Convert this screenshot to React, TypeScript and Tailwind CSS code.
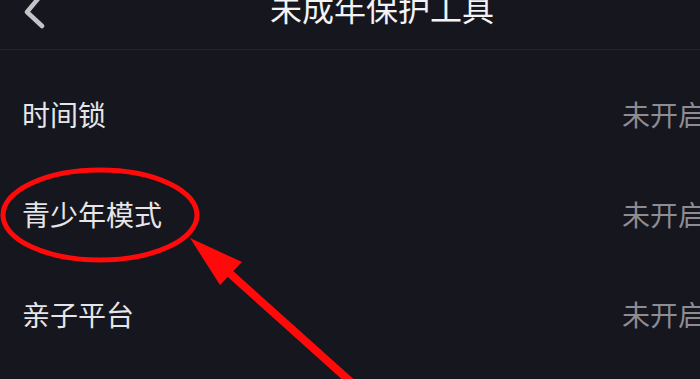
const rows = [
  { label: '时间锁', status: '未开启' },
  { label: '青少年模式', status: '未开启' },
  { label: '亲子平台', status: '未开启' },
];

function BackChevron() {
  return (
    <svg className="w-[26px] h-[40px] -mt-[10px] shrink-0" viewBox="0 0 26 40" fill="none">
      <path
        d="M20 4 L5 22 L20 36"
        stroke="#c4c4c8"
        strokeWidth="4.5"
        strokeLinecap="round"
        strokeLinejoin="round"
      />
    </svg>
  );
}

function Annotation() {
  return (
    <svg
      className="absolute inset-0 w-[700px] h-[379px] pointer-events-none"
      viewBox="0 0 700 379"
      fill="none"
    >
      <ellipse cx="100" cy="215" rx="97" ry="45" stroke="#ff0a0a" strokeWidth="5" />
      <line x1="226" y1="270" x2="362" y2="392" stroke="#ff0a0a" strokeWidth="8" />
      <polygon points="190,238 220,285 242,262" fill="#ff0a0a" />
    </svg>
  );
}

export default function App() {
  return (
    <div
      className="relative w-[700px] h-[379px] overflow-hidden bg-[#16161f]"
      style={{ fontFamily: '"Noto Sans CJK SC", "Noto Sans", sans-serif' }}
    >
      <header className="flex items-start h-[50px] pl-[22px] border-b border-[#24242d]">
        <BackChevron />
        <h1 className="ml-[222px] -mt-[9px] text-[32px] leading-[32px] font-normal text-[#f3f3f5] whitespace-nowrap">
          未成年保护工具
        </h1>
      </header>

      <div className="flex flex-col pt-[14px]">
        {rows.map((row) => (
          <div key={row.label} className="flex items-center justify-between h-[100px] pl-[22px]">
            <span className="text-[28px] leading-[28px] text-[#e6e6e9] whitespace-nowrap">{row.label}</span>
            <span className="-mr-[6px] text-[28px] leading-[28px] text-[#8c8c92] whitespace-nowrap">
              {row.status}
            </span>
          </div>
        ))}
      </div>

      <Annotation />
    </div>
  );
}
